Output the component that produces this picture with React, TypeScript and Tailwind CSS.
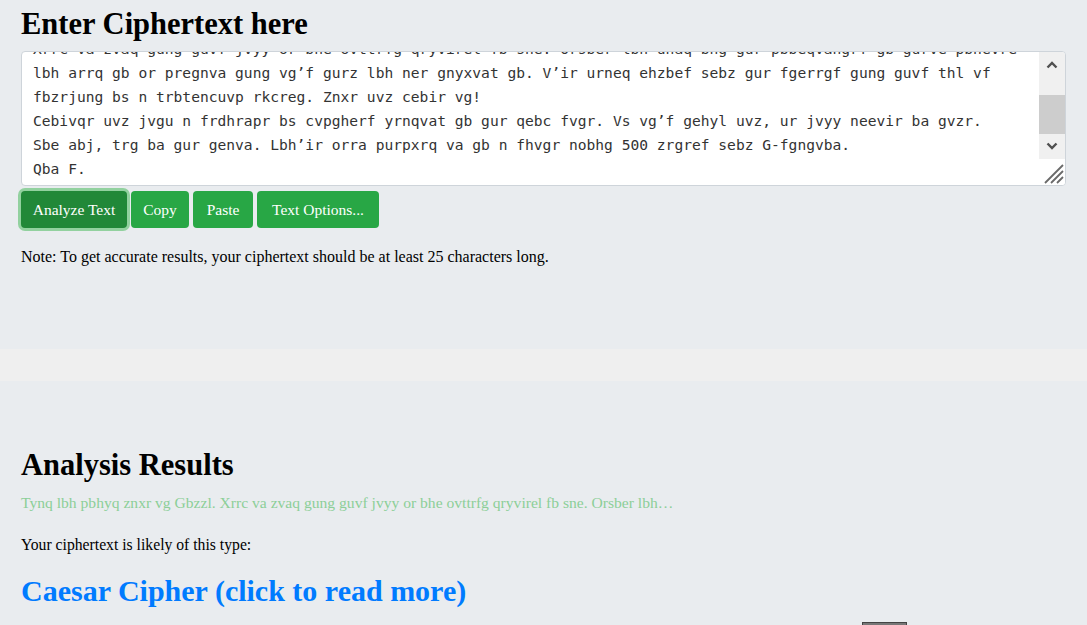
import { useEffect, useRef } from 'react';

const CIPHERTEXT = [
  'Tynq lbh pbhyq znxr vg Gbzzl.',
  'Xrrc va zvaq gung guvf jvyy or bhe ovttrfg qryvirel fb sne. Orsber lbh unaq bhg gur pbbeqvangrf gb gurve pbhevre',
  'lbh arrq gb or pregnva gung vg’f gurz lbh ner gnyxvat gb. V’ir urneq ehzbef sebz gur fgerrgf gung guvf thl vf',
  'fbzrjung bs n trbtencuvp rkcreg. Znxr uvz cebir vg!',
  'Cebivqr uvz jvgu n frdhrapr bs cvpgherf yrnqvat gb gur qebc fvgr. Vs vg’f gehyl uvz, ur jvyy neevir ba gvzr.',
  'Sbe abj, trg ba gur genva. Lbh’ir orra purpxrq va gb n fhvgr nobhg 500 zrgref sebz G-fgngvba.',
  'Qba F.',
].join('\n');

const PREVIEW =
  'Tynq lbh pbhyq znxr vg Gbzzl. Xrrc va zvaq gung guvf jvyy or bhe ovttrfg qryvirel fb sne. Orsber lbh…';

function Chevron({ down = false }: { down?: boolean }) {
  return (
    <svg width="12" height="8" viewBox="0 0 12 8" className={down ? 'rotate-180' : ''}>
      <path d="M1.5 6.5 L6 2 L10.5 6.5" fill="none" stroke="#505050" strokeWidth="2.4" />
    </svg>
  );
}

// drawn scrollbar so the width and arrows match the reference
function FakeScrollbar() {
  return (
    <div className="flex w-[26px] flex-col">
      <div className="flex h-[26px] items-center justify-center bg-[#f0f0f0]">
        <Chevron />
      </div>
      <div className="flex flex-1 flex-col bg-[#f0f0f0]">
        <div className="h-[17px]" />
        <div className="h-[39px] bg-[#cdcdcd]" />
      </div>
      <div className="flex h-[26px] items-center justify-center bg-[#f0f0f0]">
        <Chevron down />
      </div>
      <div className="flex h-[26px] items-end justify-end bg-white p-[1px]">
        <svg width="22" height="22" viewBox="0 0 22 22">
          <path d="M21 3 L3 21 M21 9 L9 21 M21 15 L15 21" stroke="#6a6a6a" strokeWidth="1.8" />
        </svg>
      </div>
    </div>
  );
}

function Button({ label, width, active = false }: { label: string; width: string; active?: boolean }) {
  return (
    <button
      className={`h-[37px] rounded-[4px] text-[15.5px] text-white ${width} ${
        active ? 'bg-[#218838] shadow-[0_0_0_3px_#92d19f]' : 'bg-[#28a745]'
      }`}
    >
      {label}
    </button>
  );
}

export default function App() {
  const areaRef = useRef<HTMLTextAreaElement>(null);

  useEffect(() => {
    // reference shows the textarea scrolled to its end
    if (areaRef.current) areaRef.current.scrollTop = areaRef.current.scrollHeight;
  }, []);

  return (
    <div className="min-h-[700px] bg-[#e9ecef] font-['Liberation_Serif',serif] text-black">
      <section className="px-[21px] pt-[6px]">
        <h1 className="text-[30.5px] font-bold leading-[36px]">Enter Ciphertext here</h1>

        <div className="mt-[9px] flex h-[135px] overflow-hidden rounded-[4px] border border-[#ced4da] bg-white">
          <textarea
            ref={areaRef}
            defaultValue={CIPHERTEXT}
            spellCheck={false}
            className="flex-1 resize-none overflow-hidden whitespace-pre px-[11px] pb-[4px] pt-[6px] font-['DejaVu_Sans_Mono',monospace] text-[14.6px] leading-[24px] text-[#333] outline-none"
          />
          <FakeScrollbar />
        </div>

        <div className="mt-[5px] flex gap-[4px]">
          <Button label="Analyze Text" width="w-[106px]" active />
          <Button label="Copy" width="w-[58px]" />
          <Button label="Paste" width="w-[60px]" />
          <Button label="Text Options..." width="w-[122px]" />
        </div>

        <p className="mt-[17px] text-[16px] leading-[24px]">
          Note: To get accurate results, your ciphertext should be at least 25 characters long.
        </p>
      </section>

      <div className="mt-[80px] h-[32px] bg-[#efefef]" />

      <section className="px-[21px] pt-[66px]">
        <h2 className="text-[30.5px] font-bold leading-[36px]">Analysis Results</h2>
        <p className="mt-[8px] text-[15.6px] leading-[24px] text-[#8ccf98]">{PREVIEW}</p>
        <p className="mt-[18px] text-[15.7px] leading-[24px]">Your ciphertext is likely of this type:</p>
        <a href="#" className="mt-[16px] block text-[30px] font-bold leading-[36px] text-[#007bff]">
          Caesar Cipher (click to read more)
        </a>
        <div className="ml-[841px] mt-[13px] h-[30px] w-[45px] border border-[#444] bg-[#777]" />
      </section>
    </div>
  );
}
